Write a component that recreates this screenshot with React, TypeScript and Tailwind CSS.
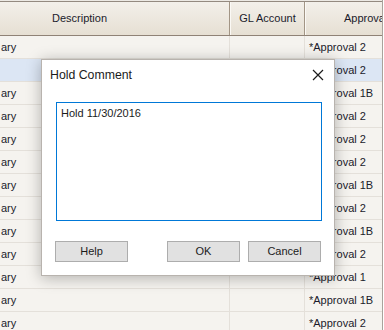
const rows = [
  { desc: "ary", approval: "*Approval 2" },
  { desc: "", approval: "*Approval 2", selected: true },
  { desc: "ary", approval: "*Approval 1B" },
  { desc: "ary", approval: "*Approval 2" },
  { desc: "ary", approval: "*Approval 2" },
  { desc: "ary", approval: "*Approval 2" },
  { desc: "ary", approval: "*Approval 1B" },
  { desc: "ary", approval: "*Approval 2" },
  { desc: "ary", approval: "*Approval 1B" },
  { desc: "ary", approval: "*Approval 2" },
  { desc: "ary", approval: "*Approval 1" },
  { desc: "ary", approval: "*Approval 1B" },
  { desc: "ary", approval: "*Approval 2" },
];

const HoldCommentDialog = () => {
  return (
    <div className="absolute left-[41px] top-[59px] w-[294px] h-[217px] flex flex-col bg-white border border-[#b8b3ae] shadow-[0_2px_14px_rgba(0,0,0,0.28)] text-[11px] text-[#1b1b1b]">
      <div className="h-[29px] shrink-0 flex items-center justify-between pl-[8px] pr-[10px]">
        <span className="text-[12.3px] pt-[1px]">Hold Comment</span>
        <svg width="12" height="12" viewBox="0 0 12 12" className="mt-[1px]">
          <path d="M1 1 L11 11 M11 1 L1 11" stroke="#1b1b1b" strokeWidth="1.2" />
        </svg>
      </div>
      <div className="mt-[13px] ml-[14px] w-[266px] h-[119px] shrink-0 border border-[#0078d7] px-[4px] pt-[2px] leading-[16px]">
        Hold 11/30/2016
      </div>
      <div className="mt-[20px] flex pl-[13px]">
        <button className="w-[73px] h-[21px] bg-[#e1e1e1] border border-[#adadad] leading-none">Help</button>
        <button className="ml-[39px] w-[73px] h-[21px] bg-[#e1e1e1] border border-[#adadad] leading-none">OK</button>
        <button className="ml-[8px] w-[73px] h-[21px] bg-[#e1e1e1] border border-[#adadad] leading-none">Cancel</button>
      </div>
    </div>
  );
};

const App = () => {
  return (
    <div
      className="relative w-[384px] h-[330px] overflow-hidden bg-white text-[11px] text-[#1b1b2b]"
      style={{ fontFamily: '"Liberation Sans", Arial, sans-serif' }}
    >
      <div className="w-[383px] h-[330px] flex flex-col bg-[#f5f3ef] border-r border-[#a9a39c]">
        <div className="h-px shrink-0 bg-[#ece9e4]" />
        <div className="h-[35px] shrink-0 flex bg-gradient-to-b from-[#f3f0ea] to-[#e6dfd3] border-t border-b border-t-[#948a80] border-b-[#8f8276]">
          <div className="w-[230px] flex items-center pl-[52px] border-r border-[#a29585]">Description</div>
          <div className="w-[75px] flex items-center justify-center border-l border-r border-l-[#fbf9f5] border-r-[#a29585]">GL Account</div>
          <div className="flex-1 flex items-center pl-[38px] whitespace-nowrap overflow-hidden border-l border-[#fbf9f5]">Approval</div>
        </div>
        {rows.map((row, i) => (
          <div
            key={i}
            className={`h-[23px] flex shrink-0 border-b border-[#e4e0da] ${row.selected ? "bg-[#dce6f4]" : ""}`}
          >
            <div className="w-[230px] flex items-center pl-[1px] border-r border-[#e4e0da]">{row.desc}</div>
            <div className="w-[75px] border-r border-[#e4e0da]" />
            <div className="flex-1 flex items-center pl-[4px] whitespace-nowrap overflow-hidden">{row.approval}</div>
          </div>
        ))}
      </div>
      <HoldCommentDialog />
    </div>
  );
};

export default App;
